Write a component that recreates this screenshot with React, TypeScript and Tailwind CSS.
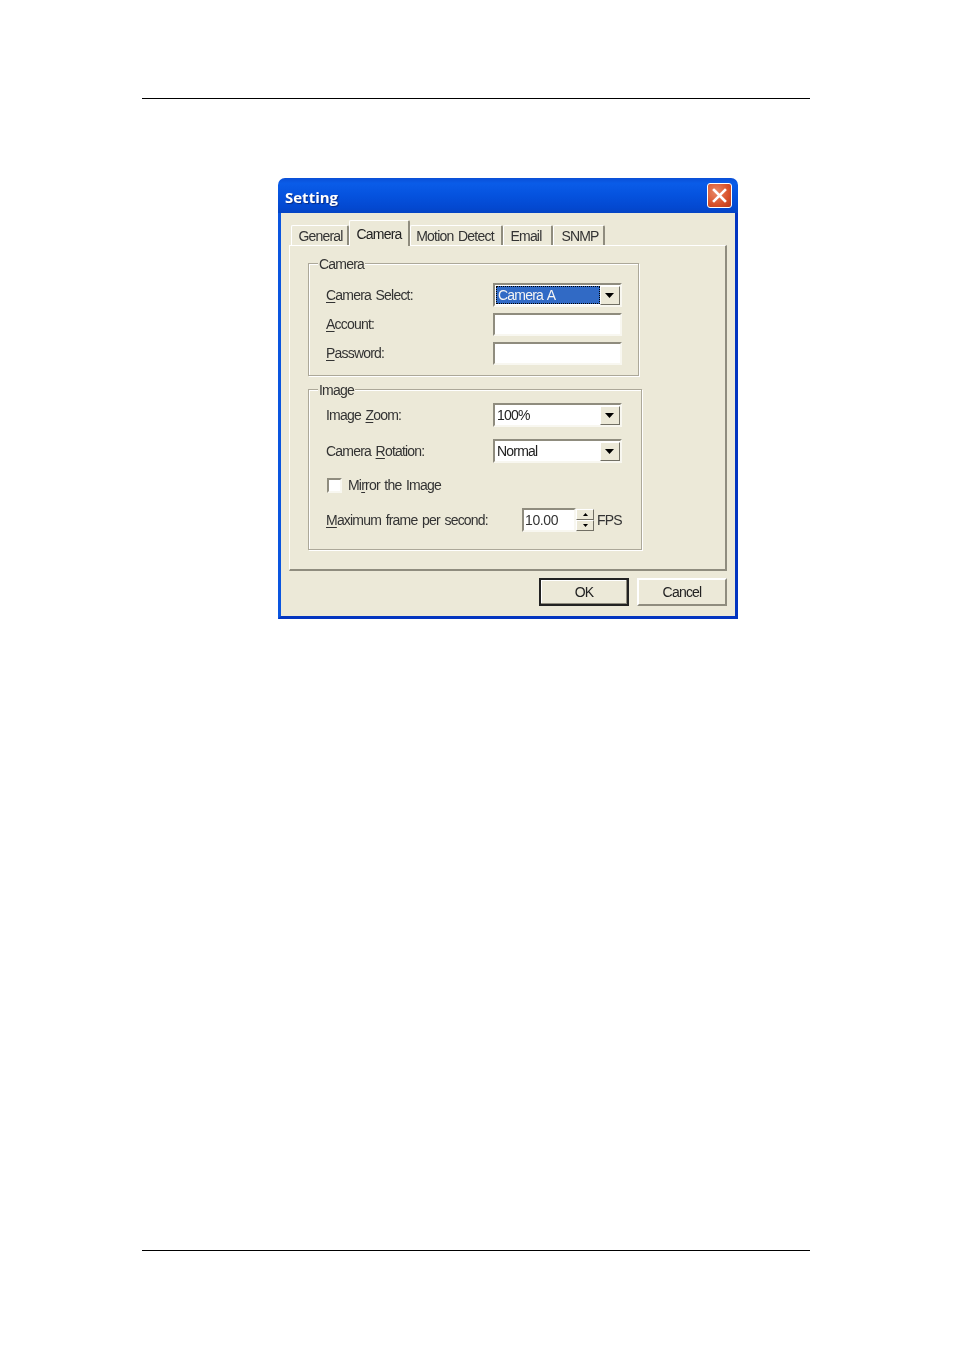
import type { ReactNode } from "react";

const font = "font-['Liberation_Sans',Arial,sans-serif]";

const tabs = [
  { label: "General", width: "w-[58px] pl-[2px]", active: false },
  { label: "Camera", width: "w-[61px]", active: true },
  { label: "Motion Detect", width: "w-[93px] pr-[2px]", active: false },
  { label: "Email", width: "w-[50px] pr-[3px]", active: false },
  { label: "SNMP", width: "w-[52px] pl-[3px]", active: false },
];

function Key({ children }: { children: string }) {
  return <span className="underline underline-offset-2">{children}</span>;
}

function Arrow() {
  return (
    <span className="flex h-[19px] w-[20px] items-center justify-center border border-t-white border-l-white border-r-[#716f64] border-b-[#716f64] bg-[#ece9d8] pr-[1px]">
      <svg width="9" height="5" viewBox="0 0 9 5">
        <path d="M0 0h9L4.5 5z" fill="#000" />
      </svg>
    </span>
  );
}

function Sunken({ className, children }: { className: string; children?: ReactNode }) {
  return (
    <div
      className={`flex border-2 border-t-[#8f8c7e] border-l-[#8f8c7e] border-r-[#f8f7f0] border-b-[#f8f7f0] bg-white ${className}`}
    >
      {children}
    </div>
  );
}

function Combo({ value, selected }: { value: string; selected?: boolean }) {
  return (
    <Sunken className="h-[24px] w-[129px] items-center justify-between pl-[1px]">
      {selected ? (
        <span className="flex h-[18px] w-[104px] items-center border border-dotted border-black bg-[#316ac5] pl-[1px] text-[#f4f4f4]">
          {value}
        </span>
      ) : (
        <span className="pl-[1px] text-[#222]">{value}</span>
      )}
      <Arrow />
    </Sunken>
  );
}

function Group({ title, className, children }: { title: string; className: string; children: ReactNode }) {
  return (
    <div className={`border border-[#aca899] shadow-[inset_1px_1px_0_#fff,1px_1px_0_#fff] ${className}`}>
      <div className="-mt-[9px] ml-[9px] h-[17px] w-fit bg-[#ece9d8] px-[1px] pt-[1px] leading-[17px] text-[#333]">
        {title}
      </div>
      {children}
    </div>
  );
}

function Row({ className, children }: { className: string; children: ReactNode }) {
  return <div className={`flex items-center text-[#333] ${className}`}>{children}</div>;
}

function Tabs() {
  return (
    <div className="flex h-[26px] items-end pl-[2px]">
      {tabs.map((t) =>
        t.active ? (
          <div
            key={t.label}
            className={`${t.width} relative z-10 flex h-[26px] items-start justify-center rounded-t-[2px] border-t border-l border-r-2 border-t-white border-l-white border-r-[#8f8c7e] bg-[#ece9d8] pt-[3px] text-[#222]`}
          >
            {t.label}
          </div>
        ) : (
          <div
            key={t.label}
            className={`${t.width} flex h-[21px] items-center justify-center rounded-t-[2px] border-t border-l border-r-2 border-t-white border-l-white border-r-[#8f8c7e] text-[#333]`}
          >
            {t.label}
          </div>
        ),
      )}
    </div>
  );
}

function Dialog() {
  return (
    <div
      className={`ml-[278px] mt-[79px] flex h-[441px] w-[460px] flex-col text-[14px] tracking-[-0.8px] [word-spacing:1.5px] ${font} blur-[0.4px]`}
    >
      <div className="flex h-[35px] items-center justify-between rounded-t-[7px] bg-[linear-gradient(180deg,#0a4fd6_0%,#0a5ce8_15%,#0552de_50%,#0348d0_85%,#0444c4_100%)] pl-[7px] pr-[6px]">
        <span className="pt-[3px] font-['Open_Sans',sans-serif] text-[15px] font-bold tracking-[0px] text-white [text-shadow:1px_1px_1px_#0a2a80]">
          Setting
        </span>
        <span className="flex h-[25px] w-[25px] items-center justify-center rounded-[3px] border border-white bg-[radial-gradient(circle_at_35%_35%,#e98a68,#d8512a_60%,#b8391a)]">
          <svg width="15" height="15" viewBox="0 0 15 15">
            <path d="M2 2l11 11M13 2L2 13" stroke="#fff" strokeWidth="2.6" strokeLinecap="square" />
          </svg>
        </span>
      </div>

      <div className="flex flex-1 flex-col border-x-[3px] border-b-[3px] border-l-[#0a55e0] border-r-[#0335c0] border-b-[#0335c0] bg-[#ece9d8] px-[8px]">
        <div className="pt-[7px]">
          <Tabs />
        </div>

        <div className="-mt-[1px] h-[326px] w-[438px] border-t border-l border-r-2 border-b-2 border-t-white border-l-white border-r-[#8f8c7e] border-b-[#8f8c7e] pl-[18px] pt-[17px]">
          <Group title="Camera" className="h-[113px] w-[331px]">
            <Row className="mt-[11px] h-[24px] pl-[17px]">
              <span className="w-[167px]">
                <Key>C</Key>amera Select:
              </span>
              <Combo value="Camera A" selected />
            </Row>
            <Row className="mt-[6px] h-[23px] pl-[17px]">
              <span className="w-[167px]">
                <Key>A</Key>ccount:
              </span>
              <Sunken className="h-[23px] w-[129px]" />
            </Row>
            <Row className="mt-[6px] h-[23px] pl-[17px]">
              <span className="w-[167px]">
                <Key>P</Key>assword:
              </span>
              <Sunken className="h-[23px] w-[129px]" />
            </Row>
          </Group>

          <Group title="Image" className="mt-[13px] h-[161px] w-[334px]">
            <Row className="mt-[5px] h-[24px] pl-[17px]">
              <span className="w-[167px]">
                Image <Key>Z</Key>oom:
              </span>
              <Combo value="100%" />
            </Row>
            <Row className="mt-[12px] h-[24px] pl-[17px]">
              <span className="w-[167px]">
                Camera <Key>R</Key>otation:
              </span>
              <Combo value="Normal" />
            </Row>
            <Row className="mt-[14px] h-[16px] pl-[18px]">
              <span className="h-[15px] w-[15px] border-2 border-t-[#8f8c7e] border-l-[#8f8c7e] border-r-[#f8f7f0] border-b-[#f8f7f0] bg-white" />
              <span className="ml-[6px]">
                Mi<Key>r</Key>ror the Image
              </span>
            </Row>
            <Row className="mt-[15px] h-[24px] pl-[17px]">
              <span className="w-[196px]">
                <Key>M</Key>aximum frame per second:
              </span>
              <Sunken className="h-[24px] w-[54px] items-center pl-[1px] tracking-[-0.4px]">10.00</Sunken>
              <span className="flex h-[22px] w-[18px] flex-col">
                <span className="flex h-[11px] items-center justify-center border border-t-white border-l-white border-r-[#716f64] border-b-[#716f64] bg-[#ece9d8]">
                  <svg width="5" height="3" viewBox="0 0 5 3">
                    <path d="M2.5 0L5 3H0z" fill="#000" />
                  </svg>
                </span>
                <span className="flex h-[11px] items-center justify-center border border-t-white border-l-white border-r-[#716f64] border-b-[#716f64] bg-[#ece9d8]">
                  <svg width="5" height="3" viewBox="0 0 5 3">
                    <path d="M0 0h5L2.5 3z" fill="#000" />
                  </svg>
                </span>
              </span>
              <span className="ml-[3px]">FPS</span>
            </Row>
          </Group>
        </div>

        <div className="mt-[7px] flex justify-end gap-[8px] text-[#222]">
          <button
            type="button"
            className="flex h-[28px] w-[90px] items-center justify-center border-2 border-[#222] bg-[#ece9d8] shadow-[inset_-1px_-1px_0_#8f8c7e,inset_1px_1px_0_#fff]"
          >
            OK
          </button>
          <button
            type="button"
            className="flex h-[28px] w-[90px] items-center justify-center border-2 border-t-white border-l-white border-r-[#8f8c7e] border-b-[#8f8c7e] bg-[#ece9d8]"
          >
            Cancel
          </button>
        </div>
      </div>
    </div>
  );
}

export default function App() {
  return (
    <div className="flex h-[1350px] w-[954px] flex-col bg-white">
      <div className="ml-[142px] mt-[98px] h-px w-[668px] bg-black" />
      <Dialog />
      <div className="ml-[142px] mt-[631px] h-px w-[668px] bg-black" />
    </div>
  );
}
